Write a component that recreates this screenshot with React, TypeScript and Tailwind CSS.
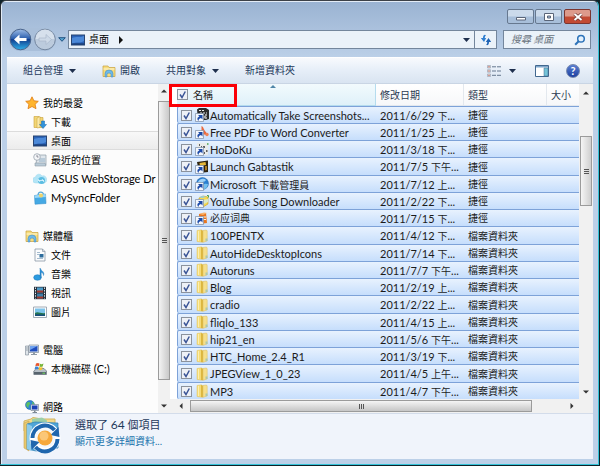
import React from 'react';

type IconName = string;

interface FileRow {
  name: string;
  date: string;
  type: string;
  icon: IconName;
}

interface NavItem {
  label: string;
  icon: IconName;
  root?: boolean;
  selected?: boolean;
}

const files: FileRow[] = [
  { name: 'Automatically Take Screenshots...', date: '2011/6/29 下...', type: '捷徑', icon: 'camera' },
  { name: 'Free PDF to Word Converter', date: '2011/1/25 上...', type: '捷徑', icon: 'pdf' },
  { name: 'HoDoKu', date: '2011/3/18 下...', type: '捷徑', icon: 'sudoku' },
  { name: 'Launch Gabtastik', date: '2011/7/5 下午...', type: '捷徑', icon: 'gab' },
  { name: 'Microsoft 下載管理員', date: '2011/7/12 上...', type: '捷徑', icon: 'globe' },
  { name: 'YouTube Song Downloader', date: '2011/2/22 下...', type: '捷徑', icon: 'song' },
  { name: '必应词典', date: '2011/7/15 下...', type: '捷徑', icon: 'dict' },
  { name: '100PENTX', date: '2011/4/12 下...', type: '檔案資料夾', icon: 'folder' },
  { name: 'AutoHideDesktopIcons', date: '2011/7/14 下...', type: '檔案資料夾', icon: 'folder' },
  { name: 'Autoruns', date: '2011/7/7 下午...', type: '檔案資料夾', icon: 'folder' },
  { name: 'Blog', date: '2011/2/19 上...', type: '檔案資料夾', icon: 'folder' },
  { name: 'cradio', date: '2011/2/22 上...', type: '檔案資料夾', icon: 'folder' },
  { name: 'fliqlo_133', date: '2011/4/15 上...', type: '檔案資料夾', icon: 'folder' },
  { name: 'hip21_en', date: '2011/5/6 下午...', type: '檔案資料夾', icon: 'folder' },
  { name: 'HTC_Home_2.4_R1', date: '2011/3/19 下...', type: '檔案資料夾', icon: 'folder' },
  { name: 'JPEGView_1_0_23', date: '2011/4/5 上午...', type: '檔案資料夾', icon: 'folder' },
  { name: 'MP3', date: '2011/4/7 下午...', type: '檔案資料夾', icon: 'folder' },
];

const navGroups: NavItem[][] = [
  [
    { label: '我的最愛', icon: 'star', root: true },
    { label: '下載', icon: 'download' },
    { label: '桌面', icon: 'desktop', selected: true },
    { label: '最近的位置', icon: 'recent' },
    { label: 'ASUS WebStorage Dr', icon: 'cloud' },
    { label: 'MySyncFolder', icon: 'bag' },
  ],
  [
    { label: '媒體櫃', icon: 'library', root: true },
    { label: '文件', icon: 'doc' },
    { label: '音樂', icon: 'music' },
    { label: '視訊', icon: 'film' },
    { label: '圖片', icon: 'picture' },
  ],
  [
    { label: '電腦', icon: 'computer', root: true },
    { label: '本機磁碟 (C:)', icon: 'disk' },
  ],
  [{ label: '網路', icon: 'network', root: true }],
];

const icons: Record<IconName, React.ReactNode> = {
  star: <path d="M7 .8l1.9 4 4.4.5-3.2 3 .9 4.4L7 10.5l-4 2.2.9-4.4-3.2-3 4.4-.5z" fill="#ffb52e" stroke="#e07b12" strokeWidth=".8" />,
  download: (
    <>
      <path d="M1 1.500h5l1 1h3v10H1z" fill="#f2d675" stroke="#c79f38" strokeWidth=".6" />
      <path d="M4 3l3-1.500v11L4 13z" fill="#fae9a6" stroke="#c79f38" strokeWidth=".5" />
      <path d="M8.500 6h3v3.500h2L10 13.500 6.500 9.500h2z" fill="#2f93dc" stroke="#1565a8" strokeWidth=".5" />
    </>
  ),
  desktop: (
    <>
      <rect x=".5" y="2" width="13" height="10" fill="#2a63b8" stroke="#274472" />
      <path d="M1 11L1 5c4-2 8 0 12-2v5c-4 3-8 0-12 3z" fill="#5b9ae6" opacity=".7" />
      <path d="M1 10.500h12v1H1z" fill="#17325e" />
    </>
  ),
  recent: (
    <>
      <path d="M4 2h9v10H3z" fill="#dfe6ec" stroke="#8e9ba6" strokeWidth=".7" />
      <path d="M6 6h6M6 8h6" stroke="#7da1bd" strokeWidth=".8" />
      <path d="M2 10h10l1 3H2z" fill="#b9cbd8" stroke="#8e9ba6" strokeWidth=".6" />
      <circle cx="4" cy="4" r="3.300" fill="#f4f6f8" stroke="#9aa4ae" strokeWidth=".8" />
      <path d="M4 2v2h1.500" stroke="#667" strokeWidth=".7" fill="none" />
    </>
  ),
  cloud: (
    <>
      <path d="M3 11a3 3 0 0 1-.5-6A3.500 3.500 0 0 1 9 4a3.500 3.500 0 0 1 2 7z" fill="#b4e5f6" stroke="#a5dcf0" strokeWidth=".6" />
      <circle cx="8.500" cy="8.500" r="3.500" fill="#5cbde2" />
      <path d="M5 8.500h6M5 7l2 3M9 7l2 3" stroke="#e6f8ff" strokeWidth=".8" />
    </>
  ),
  bag: (
    <>
      <path d="M5 4.500C5 0 10.500 0 10.500 4" fill="none" stroke="#5aa9d8" strokeWidth="1.200" />
      <path d="M1.500 4.500L12.500 3l.5 9.500-11 .7z" fill="#45a9e4" stroke="#3d93cd" strokeWidth=".6" />
      <path d="M1.500 4.500L12.500 3l.3 3L1.700 7z" fill="#9ad7f7" />
      <circle cx="8" cy="4.500" r="2" fill="#efd26a" />
    </>
  ),
  library: (
    <>
      <path d="M1 2h5l1 1.500h6v9H1z" fill="#f6dc7e" stroke="#c9a03c" strokeWidth=".7" />
      <path d="M1.500 5h11" stroke="#fff6cf" />
      <path d="M3 13V9.500a4 3.500 0 0 1 8 0V13H9v-2.500a2 1.500 0 0 0-4 0V13z" fill="#6fb9e8" stroke="#3c86bd" strokeWidth=".5" />
    </>
  ),
  doc: (
    <>
      <path d="M2 1h7.500L12 3.500V13H2z" fill="#fbfcfd" stroke="#8a97a5" strokeWidth=".8" />
      <path d="M9.500 1v2.500H12" fill="none" stroke="#8a97a5" strokeWidth=".7" />
      <path d="M4 4.500h3M4 6.500h2M4 10.500h6" stroke="#8fa9c2" strokeWidth=".8" />
      <rect x="6.500" y="6" width="4" height="3.500" fill="#2d6c9c" />
    </>
  ),
  music: (
    <>
      <ellipse cx="4.500" cy="10.500" rx="3.800" ry="2.800" fill="#2b9be0" stroke="#1872b4" strokeWidth=".5" />
      <path d="M7 10.500V1c1 3 5 3.500 3.500 7.500C10.500 6 9 5.500 8.200 5.500v5z" fill="#2b8fd8" stroke="#1872b4" strokeWidth=".4" />
    </>
  ),
  film: (
    <>
      <path d="M1 .8h12v12.400H1z" fill="#26313d" />
      <path d="M4 1.500h6v5H4z" fill="#4c9bc9" />
      <path d="M4 7.500h6v5H4z" fill="#3a7ea9" />
      <path d="M4 4.500h6v2H4zM4 10.500h6v2H4z" fill="#a5382c" />
      <path d="M2.500 1.500v11M11.500 1.500v11" stroke="#e7eef3" strokeDasharray="1.400 1.200" />
    </>
  ),
  picture: (
    <>
      <path d="M.5 2h13v10.500H.5z" fill="#fdfdfd" stroke="#8a97a5" strokeWidth=".8" />
      <path d="M2 3.500h10V11H2z" fill="#7cc3ea" />
      <path d="M2 8c3-2 6 1 10 0v3H2z" fill="#247550" />
      <path d="M2 9.500c4-1 6 .5 10 0V11H2z" fill="#174e7a" />
    </>
  ),
  computer: (
    <>
      <path d="M.5 3h3v9h-3z" fill="#dfe5ea" stroke="#7b8793" strokeWidth=".6" />
      <path d="M1.200 5h1.500M1.200 7h1.500" stroke="#65717d" strokeWidth=".7" />
      <path d="M4 2h9.500v7.500H4z" fill="#dfe7f1" stroke="#6c7a8c" strokeWidth=".6" />
      <path d="M5 3h7.500v5.500H5z" fill="#1f4dbd" />
      <path d="M5 3h7.500L5 7z" fill="#6ea1ee" />
      <path d="M8 9.500h2v1.500h2v1H6v-1h2z" fill="#8d99a6" />
    </>
  ),
  disk: (
    <>
      <path d="M2 8l2-1.500h7l2.500 2.500v3.500H.8V9z" fill="#b7bfc6" stroke="#66717b" strokeWidth=".7" />
      <path d="M1 10h12v2.300H1z" fill="#58646e" />
      <path d="M9.500 10.700h2.500v1H9.500z" fill="#6fe05a" />
      <path d="M3 1.500c1.500-.8 2.500-.6 3.500 0L5.800 4.300c-1-.7-2-.7-3.500 0z" fill="#e8552c" />
      <path d="M7 1.800c1 .5 2 .5 3.500-.2l-.8 2.900c-1.200.6-2.300.6-3.300 0z" fill="#79b53a" />
      <path d="M2.200 4.800c1.300-.6 2.400-.5 3.400.1L5 7.500c-1-.6-2-.6-3.500 0z" fill="#3b85d6" />
      <path d="M6.200 5c1 .6 2.200.6 3.400.1L9 7.800c-1.200.5-2.300.5-3.400-.1z" fill="#f4bf2f" />
    </>
  ),
  network: (
    <>
      <circle cx="5" cy="5" r="4.500" fill="#2f86d9" stroke="#1a5b9e" strokeWidth=".5" />
      <path d="M2 2.500c2-1.500 4 0 3 1.500S3 6 3.500 8C1 7 .5 4.500 2 2.500zM7 1.500c2 1 2.500 2.500 2 4L7.500 4z" fill="#5dc05f" />
      <path d="M6 4.500h7.500v6H6z" fill="#e2e8f2" stroke="#6c7a8c" strokeWidth=".6" />
      <path d="M7 5.500h5.500v4H7z" fill="#1c3fb5" />
      <path d="M9 10.500h1.500v1.500H12v1H7.500v-1H9z" fill="#7d8995" />
    </>
  ),
  folder: (
    <>
      <path d="M2 1.500L6.500.8v12.400L2 12.500z" fill="#f5dc78" stroke="#e3c463" strokeWidth=".5" />
      <path d="M3.500 2v10" stroke="#fcefb0" />
      <path d="M6 1l2 .5v12L6 13z" fill="#dcb63f" />
      <path d="M8 1.500l3.500-.5.7 1v10L8 13.300z" fill="#f5df8c" stroke="#dcbc5a" strokeWidth=".5" />
      <path d="M10.500 9.500h2v2.500h-2z" fill="#a9c7b0" />
    </>
  ),
  camera: (
    <>
      <path d="M2 1.500L4 0h7l3 2v9l-3 1H3z" fill="#2b2b2b" />
      <path d="M4 2.500h5M5 5h7M11 6v5" stroke="#e9e9e9" strokeWidth="1.200" strokeDasharray="2 1" />
      <circle cx="10" cy="9" r="1.500" fill="#aaa" />
    </>
  ),
  pdf: (
    <>
      <path d="M6.500 1c2.500 1 2 4 4.500 6l1.500 3-3.500-.5L6.500 8z" fill="#e8693f" />
      <circle cx="12" cy="9.500" r="1.700" fill="#f08257" />
    </>
  ),
  sudoku: (
    <>
      <path d="M2 1h11v12H2z" fill="#e9ebea" />
      <path d="M4 3h1M8 5h2M11 9h1.500M9 11h1M6 5h1" stroke="#333" strokeWidth="1.600" />
      <path d="M12 2h1.500" stroke="#4aa34e" strokeWidth="1.500" />
    </>
  ),
  gab: (
    <>
      <path d="M2 2l11-1.500V12l-9 1z" fill="#2e2412" />
      <path d="M4.500 3l6-1 .5 3-6 1z" fill="#e7b838" />
      <path d="M10 6l2 0v4l-2 .5z" fill="#a87920" />
    </>
  ),
  globe: (
    <>
      <circle cx="7.500" cy="6.500" r="6" fill="#2b80d2" stroke="#1f5fa3" strokeWidth=".5" />
      <path d="M3 5c2-4 6-4 8-2-1 2-2 1-3 2S4 7 3 5z" fill="#9fd1f7" />
      <path d="M8 8c2-2 4-1 5-1-.5 3-2 5-4 5z" fill="#74c0ef" />
    </>
  ),
  song: (
    <>
      <path d="M4 4l4-2 5 1v7l-5 3-4-2z" fill="#f5d950" stroke="#c49b24" strokeWidth=".6" />
      <path d="M4 3l4-1 3 1-4 1z" fill="#8fd0e8" />
      <path d="M8 6l5-1v3l-4 2z" fill="#d9e9c8" />
      <path d="M12 1.500h1.500v2" stroke="#4aa34e" fill="none" />
    </>
  ),
  dict: (
    <>
      <path d="M4 3l7-1 1 10-8 1z" fill="#e8761f" />
      <path d="M4 3L9 1.500 12 2 8 4z" fill="#f9b26b" />
      <path d="M7 6h4M7 8.500h4" stroke="#fff1de" />
    </>
  ),
};

function Icon({ name, shortcut }: { name: IconName; shortcut?: boolean }) {
  return (
    <svg viewBox="0 0 14 14" className="h-3.5 w-3.5 shrink-0" aria-hidden="true">
      {icons[name]}
      {shortcut && (
        <>
          <path d="M.5 5.500h8v8h-8z" fill="#f4f7fc" stroke="#7c8ca3" strokeWidth=".7" />
          <path d="M3 7h4.500v4.500L6 10c-2 .5-2.500 1.500-2.500 3C1.500 11 2.500 9 4.500 8.500z" fill="#1c4aa8" />
        </>
      )}
    </svg>
  );
}

// Latin runs are set one step larger than the Chinese text around them
function Text({ children }: { children: string }) {
  return (
    <>
      {children.split(/([\u3400-\u9fff]+)/).filter(Boolean).map((part, i) => (
        <span key={i} className={/[\u3400-\u9fff]/.test(part) ? 'text-[10px]' : 'text-[11px]'}>
          {part}
        </span>
      ))}
    </>
  );
}

function Check({ label }: { label: string }) {
  return (
    <span className="grid h-[11px] w-[11px] shrink-0">
      <input
        type="checkbox"
        defaultChecked
        aria-label={label}
        className="peer col-start-1 row-start-1 h-[11px] w-[11px] appearance-none border border-[#8b929c] bg-[#eef1f6]"
      />
      <svg viewBox="0 0 11 11" className="pointer-events-none invisible col-start-1 row-start-1 h-[11px] w-[11px] peer-checked:visible">
        <path d="M3 5.500l2 3L8.300 2.500" fill="none" stroke="#3a5496" strokeWidth="1.500" />
      </svg>
    </span>
  );
}

function Caret() {
  return (
    <svg viewBox="0 0 7 4" className="h-1 w-[7px] shrink-0">
      <path d="M0 0h7L3.500 4z" fill="#1e2f4d" />
    </svg>
  );
}

function Arrow({ d, label }: { d: string; label: string }) {
  return (
    <button aria-label={label} className="grid h-3.5 w-3.5 shrink-0 place-items-center">
      <svg viewBox="0 0 6 6" className="h-1.5 w-1.5">
        <path d={d} fill="#333" />
      </svg>
    </button>
  );
}

const UP = 'M0 4.500L3 1.500l3 3z';
const DOWN = 'M0 1.500h6L3 4.500z';
const LEFT = 'M4.500 0v6L1.500 3z';
const RIGHT = 'M1.500 0v6L4.500 3z';

function TitleBar() {
  const glass = 'grid h-[15px] w-[27px] place-items-center rounded-[2px] border border-[#66788f] bg-linear-to-b from-[#cbdaeb] from-45% to-[#a8bfda] to-55%';
  return (
    <div className="flex h-[26px] justify-end gap-px pt-[7px] pr-0.5">
      <button aria-label="最小化" className={glass}>
        <svg viewBox="0 0 10 8" className="h-2 w-2.5"><path d="M.5 4.500h9v2.500h-9z" fill="#fff" stroke="#5a6578" /></svg>
      </button>
      <button aria-label="最大化" className={glass}>
        <svg viewBox="0 0 10 8" className="h-2 w-2.5">
          <path d="M.5.5h9v7h-9z" fill="#fff" stroke="#5a6578" />
          <path d="M3.500 3h3v2h-3z" fill="#a8bfda" stroke="#5a6578" />
        </svg>
      </button>
      <button
        aria-label="關閉"
        className="ml-px grid h-[15px] w-[27px] place-items-center rounded-[2px] border border-[#7b3530] bg-linear-to-b from-[#dd9a8b] from-45% to-[#c24a33] to-55%"
      >
        <svg viewBox="0 0 10 8" className="h-2 w-2.5">
          <path d="M1.500 1l7 6M8.500 1l-7 6" stroke="#6f3a37" strokeWidth="3.400" />
          <path d="M1.500 1l7 6M8.500 1l-7 6" stroke="#fff" strokeWidth="1.900" />
        </svg>
      </button>
    </div>
  );
}

function AddressBar() {
  return (
    <div className="mb-1.5 flex h-[23px] items-center pr-0.5 pl-0.5">
      <div className="flex h-[23px] w-[47px] gap-px rounded-full bg-[#a9bfda]">
        <button aria-label="上一頁" className="h-[23px] w-[23px]">
          <svg viewBox="0 0 23 23" className="h-[23px] w-[23px]">
            <defs>
              <linearGradient id="back" x1="0" y1="0" x2="0" y2="1">
                <stop offset="0" stopColor="#9dbce6" />
                <stop offset=".45" stopColor="#2c5fae" />
                <stop offset=".5" stopColor="#123f8f" />
                <stop offset="1" stopColor="#2fb0ea" />
              </linearGradient>
            </defs>
            <circle cx="11.500" cy="11.500" r="10.300" fill="url(#back)" stroke="#49638b" strokeWidth="1" />
            <path d="M5 11.500l5.500-5v3.500h7v3h-7v3.500z" fill="#fff" />
          </svg>
        </button>
        <button aria-label="下一頁" className="h-[23px] w-[23px]">
          <svg viewBox="0 0 23 23" className="h-[23px] w-[23px]">
            <circle cx="12" cy="11.500" r="10.300" fill="#bccbdd" stroke="#74869f" strokeWidth="1" />
            <path d="M2.500 11a9.500 9.500 0 0 1 19 0z" fill="#d6e0ec" />
            <path d="M18.500 11.500l-5.500-5v3.500H6v3h7v3.500z" fill="#cdd9e7" stroke="#a4b4c8" strokeWidth=".6" />
          </svg>
        </button>
      </div>
      <button aria-label="最近的頁面" className="grid h-4 w-3 place-items-center">
        <svg viewBox="0 0 8 5" className="h-[5px] w-2"><path d="M.7.7h6.600L4 4.300z" fill="#58a5d3" stroke="#164a78" strokeWidth=".9" /></svg>
      </button>
      <div className="flex h-[19px] flex-1 items-center border border-[#74869c] bg-[#ebf2f9] pl-0.5">
        <Icon name="desktop" />
        <span className="ml-1 text-[10px]">桌面</span>
        <button aria-label="展開" className="ml-2 grid h-4 w-2 place-items-center">
          <svg viewBox="0 0 4 8" className="h-2 w-1"><path d="M0 0l4 4-4 4z" fill="#111" /></svg>
        </button>
        <button aria-label="先前的位置" className="mr-1 ml-auto grid h-full w-2 place-items-center"><Caret /></button>
        <button aria-label="重新整理" className="grid h-full w-[22px] place-items-center border-l border-[#74869c]">
          <svg viewBox="0 0 12 12" className="h-3 w-3">
            <path d="M5 .8C3.500 1 3 2 3 4H.8l3.200 4 2.200-4H4.800C4.800 3 5 2 6 1.500z" fill="#2f7ed0" />
            <path d="M7 11.200c1.500-.2 2-1.200 2-3.200h2.200L8.500 4 5.800 8h1.400c0 1 0 2-1 2.500z" fill="#1f63b4" />
          </svg>
        </button>
      </div>
      <div className="ml-1.5 flex h-[19px] w-[88px] items-center border border-[#74869c] bg-[#ebf2f9] pr-1 pl-[7px]">
        <input type="search" aria-label="搜尋 桌面" placeholder="搜尋 桌面" className="w-full min-w-0 flex-1 bg-transparent text-[10px] italic outline-none placeholder:text-[#6a7480]" />
        <svg viewBox="0 0 12 12" className="h-3 w-3 shrink-0">
          <circle cx="7" cy="4.800" r="3.300" fill="#e4f1fc" stroke="#2d73b9" strokeWidth="1.500" />
          <path d="M4.600 7.200L1.200 10.800" stroke="#2d73b9" strokeWidth="2" />
        </svg>
      </div>
    </div>
  );
}

function Toolbar() {
  return (
    <div className="flex h-[27px] items-center border-t border-b border-t-white border-b-[#c9d5e4] bg-linear-to-b from-[#f8fafd] via-[#e6eef8] to-[#d9e4f1] pl-4 text-[10px] text-[#1e395b]">
      <button className="flex items-center gap-1.5">組合管理<Caret /></button>
      <button className="ml-[26px] flex items-center gap-1"><Icon name="library" />開啟</button>
      <button className="ml-[26px] flex items-center gap-1.5">共用對象<Caret /></button>
      <button className="ml-[26px]">新增資料夾</button>
      <button aria-label="變更檢視" className="mr-[19px] ml-auto flex items-center gap-2">
        <svg viewBox="0 0 14 12" className="h-3 w-3.5">
          <path d="M.5.5h3v2.500h-3zM.5 4.700h3v2.500h-3zM.5 9h3v2.500h-3z" fill="#f3e9e6" stroke="#8f9bad" strokeWidth=".6" />
          <path d="M1.300 1.800h1.400M1.300 6h1.400M1.300 10.300h1.400" stroke="#b45a4c" />
          <path d="M5 1.800h4M10 1.800h4M5 6h4M10 6h4M5 10.300h4M10 10.300h4" stroke="#66788f" />
        </svg>
        <Caret />
      </button>
      <button aria-label="預覽窗格" className="mr-[17px]">
        <svg viewBox="0 0 14 12" className="h-3 w-3.5">
          <path d="M.5.5h13v11H.5z" fill="#fff" stroke="#42688f" />
          <path d="M1 1h12v1.500H1z" fill="#7ea6cb" />
          <path d="M9 3h4v8H9z" fill="#74c3d8" stroke="#42688f" strokeWidth=".5" />
        </svg>
      </button>
      <button aria-label="說明" className="mr-[13px] grid h-3.5 w-3.5 place-items-center rounded-full border border-[#7487ad] bg-linear-to-b from-[#5b7fd2] to-[#1d3f9f] text-[11px] leading-none font-bold text-white">
        ?
      </button>
    </div>
  );
}

function Sidebar() {
  return (
    <div className="flex w-[163px] shrink-0 bg-[#fcfcfc]">
      <nav className="h-[329px] min-w-0 flex-1 overflow-hidden pt-[9px]">
        {navGroups.map((group, g) => (
          <ul key={g} className="mb-[19px]">
            {group.map((item) => (
              <li key={item.label}>
                <a
                  href="#"
                  className={`flex h-[19px] items-center gap-1 whitespace-nowrap text-black ${item.root ? 'pl-[18px]' : 'pl-[26px]'} ${
                    item.selected ? 'border-y border-[#dcdcdc] bg-linear-to-b from-[#f8f8f8] to-[#ececec]' : ''
                  }`}
                >
                  <Icon name={item.icon} />
                  <span className="leading-4"><Text>{item.label}</Text></span>
                </a>
              </li>
            ))}
          </ul>
        ))}
      </nav>
      <div className="flex w-3 shrink-0 flex-col items-center bg-[#f1f1f1]">
        <Arrow d={UP} label="向上捲動" />
        <div className="mt-[3px] grid w-full flex-1 place-items-center border border-[#9b9b9b] bg-linear-to-r from-[#f3f3f3] to-[#c9c9c9]">
          <Grip />
        </div>
        <div className="h-[19px]" />
        <Arrow d={DOWN} label="向下捲動" />
      </div>
    </div>
  );
}

function Grip({ vertical }: { vertical?: boolean }) {
  return (
    <svg viewBox="0 0 7 7" className="h-[7px] w-[7px]">
      <path d={vertical ? 'M1.500 1v5M3.500 1v5M5.500 1v5' : 'M1 1.500h5M1 3.500h5M1 5.500h5'} stroke="#555" />
    </svg>
  );
}

function FileTable() {
  const head = 'border-r border-b border-[#e3e8ee] pl-1 text-left font-normal whitespace-nowrap text-[#2b3a52]';
  const cell = 'overflow-hidden border-t border-[#7da2d8] p-0 pl-1 whitespace-nowrap';
  return (
    <table className="w-full table-fixed border-separate border-spacing-0 leading-none text-[#1b1b1b]">
      <thead>
        <tr className="h-[22px] bg-linear-to-b from-white to-[#f6f7f9] text-[10px]">
          <th className="border-r border-b border-[#b5dcee] bg-linear-to-b from-[#f2fafd] to-[#dff1f9] p-0 text-left font-normal">
            <span className="relative flex items-center gap-[5px]">
              <Check label="全選" />
              名稱
              <svg viewBox="0 0 6 3" className="absolute -top-1 left-[93px] h-[3px] w-1.5"><path d="M0 3l3-3 3 3z" fill="#4f86a8" /></svg>
              <span className="pointer-events-none absolute -top-[5px] -left-2 h-[23px] w-[68px] border-3 border-[#fb0007]" />
            </span>
          </th>
          <th className={`w-[88px] ${head}`}>修改日期</th>
          <th className={`w-[83px] ${head}`}>類型</th>
          <th className={`w-8 border-r-0 ${head}`}>大小</th>
        </tr>
      </thead>
      <tbody className="[&>tr:nth-child(4n)]:h-[18px]">
        {files.map((file) => (
          <tr key={file.name} className="h-[17px] bg-linear-to-b from-[#eaf3fe] to-[#c6defc]">
            <td className="overflow-hidden rounded-l-[2px] border-t border-l border-[#7da2d8] p-0 pl-[3px]">
              <span className="flex h-4 items-center whitespace-nowrap">
                <Check label={file.name} />
                <span className="mr-px ml-0.5 flex pl-px"><Icon name={file.icon} shortcut={file.type === '捷徑'} /></span>
                <span><Text>{file.name}</Text></span>
              </span>
            </td>
            <td className={cell}><Text>{file.date}</Text></td>
            <td className={cell}><Text>{file.type}</Text></td>
            <td className={cell} />
          </tr>
        ))}
      </tbody>
    </table>
  );
}

function FileList() {
  return (
    <div className="flex min-w-0 flex-1 flex-col bg-white">
      <div className="flex">
        <div className="min-w-0 flex-1 pl-[7px]">
          <FileTable />
        </div>
        <div className="flex w-3.5 shrink-0 flex-col items-center bg-[#f1f1f1]">
          <div className="h-0.5" />
          <Arrow d={UP} label="向上捲動" />
          <div className="mt-9 grid h-[70px] w-3 place-items-center border border-[#9b9b9b] bg-linear-to-r from-[#f5f5f5] to-[#cfcfcf]">
            <Grip />
          </div>
          <div className="flex-1" />
          <Arrow d={DOWN} label="向下捲動" />
        </div>
      </div>
      <div className="flex h-3.5 items-center bg-[#f1f1f1] pl-1">
        <Arrow d={LEFT} label="向左捲動" />
        <div className="mr-[33px] ml-0.5 grid h-3 flex-1 place-items-center border border-[#9b9b9b] bg-linear-to-b from-[#f5f5f5] to-[#c6c6c6]">
          <Grip vertical />
        </div>
        <Arrow d={RIGHT} label="向右捲動" />
        <div className="w-3.5" />
      </div>
    </div>
  );
}

function DetailsPane() {
  return (
    <div className="flex h-[46px] items-start gap-3.5 border-t border-[#d3dcea] bg-[#f0f4fb] pt-[3px] pl-4">
      <svg viewBox="0 0 38 38" className="h-[38px] w-[38px] shrink-0" aria-hidden="true">
        <path d="M1 4l7-2 2-1.500 9 1.500h13v12H1z" fill="#f3d98a" stroke="#d3b664" />
        <path d="M1 6l5-2v30l-5-3z" fill="#e9c86c" stroke="#c9a652" strokeWidth=".6" />
        <path d="M9 2l10-1.500 5 3v5H9z" fill="#9ccfa8" />
        <path d="M4 7l8-2 23 1v25l-22 3-9-2z" fill="#4fa5d8" stroke="#2f7fb3" strokeWidth=".7" />
        <path d="M4 7l5 2v25l-5-2z" fill="#8ccbea" />
        <circle cx="22" cy="21" r="12" fill="none" stroke="#fff" strokeWidth="7" />
        <circle cx="22" cy="21" r="10" fill="#f4f8fb" />
        <path d="M9.500 21a12.500 12.500 0 0 1 22-8" fill="none" stroke="#1f66ad" strokeWidth="4" />
        <path d="M36.500 20l-9-2 8-8z" fill="#1f66ad" />
        <path d="M34.500 22a12.500 12.500 0 0 1-22 8" fill="none" stroke="#1f66ad" strokeWidth="4" />
        <path d="M7.500 23l9 2-8 8z" fill="#1f66ad" />
        <circle cx="22" cy="21" r="7.500" fill="#f6a83a" />
        <circle cx="21" cy="19" r="4.500" fill="#fbc777" />
      </svg>
      <div className="leading-4">
        <p className="text-[11px] text-[#1e395b]">選取了 <span className="text-[12px]">64</span> 個項目</p>
        <a href="#" className="block text-[10px] text-[#1c74ad]">顯示更多詳細資料...</a>
      </div>
    </div>
  );
}

export default function App() {
  return (
    <div className="min-h-screen bg-[#0d2229] pr-px pb-px font-['Lato','Noto_Sans_CJK_TC',sans-serif] text-[10px] select-none">
      <div className="overflow-hidden rounded-t-[6px] border border-t-[#3c4148] border-r-[#35c3d8] border-b-[#35c3d8] border-l-[#2a2f36] bg-[#bcd0e8]">
        <div className="border-t border-l border-[#e3ecf6] bg-[linear-gradient(to_bottom,#9ab3d2,#bcd0e8_56px)] pr-[5px] pb-[5px] pl-[5px]">
          <TitleBar />
          <AddressBar />
          <main>
            <Toolbar />
            <div className="flex">
              <Sidebar />
              <FileList />
            </div>
            <DetailsPane />
          </main>
        </div>
      </div>
    </div>
  );
}
